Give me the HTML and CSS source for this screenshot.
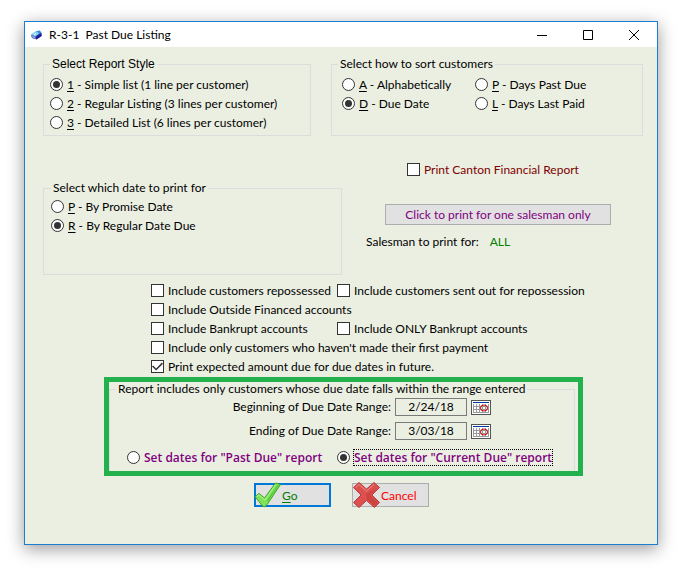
FILE: index.html
```html
<!DOCTYPE html>
<html lang="en">
<head>
    <meta charset="UTF-8">
    <meta name="viewport" content="width=device-width, initial-scale=1.0">
    <title>R-3-1 Past Due Listing</title>
    <link rel="stylesheet" href="styles.css">
</head>
<body>

    <main class="window">
        <header class="titlebar">
            <svg class="app-icon" width="11" height="10" viewBox="0 0 11 10">
                <path d="M0 5L6 1L10.500 3V6L5.500 9.500L1 8Z" fill="#2a3cc4"/>
                <path d="M0 4.500L5 1L9 3L4.500 6.500Z" fill="#7fd3ee"/>
                <path d="M6 1L9 .5L10.500 3L8 3.500Z" fill="#3f86d8"/>
                <path d="M0 5L4.500 6.500V9L1 7.500Z" fill="#8c94d4"/>
                <path d="M5 6.500L10.500 3.500V6L5.500 9.500Z" fill="#1a1f8f"/>
                <path d="M3 4.500L5 3.500" stroke="#fff"/>
            </svg>
            <h1>R-3-1&nbsp; Past Due Listing</h1>
            <div class="window-buttons">
                <button type="button" aria-label="Minimize"><svg width="10" height="10"><path d="M0 5.500H10"/></svg></button>
                <button type="button" aria-label="Maximize"><svg width="10" height="10"><path d="M.5 .5H9.500V9.500H.5Z"/></svg></button>
                <button type="button" aria-label="Close"><svg width="10" height="10"><path d="M0 0L10 10M10 0L0 10"/></svg></button>
            </div>
        </header>

        <form class="client">
            <!-- Report style and sort order -->
            <div class="row-top">
                <fieldset>
                    <legend class="legend-alt">Select Report Style</legend>
                    <label class="option"><input type="radio" name="style" checked><span><u>1</u> - Simple list (1 line per customer)</span></label>
                    <label class="option"><input type="radio" name="style"><span><u>2</u> - Regular Listing (3 lines per customer)</span></label>
                    <label class="option"><input type="radio" name="style"><span><u>3</u> - Detailed List (6 lines per customer)</span></label>
                </fieldset>
                <fieldset>
                    <legend>Select how to sort customers</legend>
                    <div class="sort-options">
                        <label class="option"><input type="radio" name="sort"><span><u>A</u> - Alphabetically</span></label>
                        <label class="option"><input type="radio" name="sort"><span><u>P</u> - Days Past Due</span></label>
                        <label class="option"><input type="radio" name="sort" checked><span><u>D</u> - Due Date</span></label>
                        <label class="option"><input type="radio" name="sort"><span><u>L</u> - Days Last Paid</span></label>
                    </div>
                </fieldset>
            </div>

            <!-- Date type and salesman -->
            <div class="row-middle">
                <fieldset class="date-type">
                    <legend>Select which date to print for</legend>
                    <label class="option"><input type="radio" name="dateType"><span><u>P</u> - By Promise Date</span></label>
                    <label class="option"><input type="radio" name="dateType" checked><span><u>R</u> - By Regular Date Due</span></label>
                </fieldset>
                <div class="salesman">
                    <label class="option canton"><input type="checkbox"><span>Print Canton Financial Report</span></label>
                    <button type="button" class="btn salesman-button">Click to print for one salesman only</button>
                    <p class="salesman-line">Salesman to print for: <span class="salesman-value">ALL</span></p>
                </div>
            </div>

            <!-- Include options -->
            <div class="includes">
                <label class="option"><input type="checkbox"><span>Include customers repossessed</span></label>
                <label class="option"><input type="checkbox"><span>Include customers sent out for repossession</span></label>
                <label class="option wide"><input type="checkbox"><span>Include Outside Financed accounts</span></label>
                <label class="option"><input type="checkbox"><span>Include Bankrupt accounts</span></label>
                <label class="option"><input type="checkbox"><span>Include ONLY Bankrupt accounts</span></label>
                <label class="option wide"><input type="checkbox"><span>Include only customers who haven't made their first payment</span></label>
                <label class="option wide"><input type="checkbox" checked><span>Print expected amount due for due dates in future.</span></label>
            </div>

            <!-- Due date range -->
            <div class="highlight">
                <fieldset class="range">
                    <legend>Report includes only customers whose due date falls within the range entered</legend>
                    <div class="range-fields">
                        <label for="beginDate">Beginning of Due Date Range:</label>
                        <input type="text" class="date" id="beginDate" value="2/24/18">
                        <button type="button" class="calendar" aria-label="Pick beginning date">
                            <svg width="16" height="11" viewBox="0 0 16 11">
                                <path d="M0 0H16V11H0Z" fill="#fff"/>
                                <path d="M.5 2V11M3.500 2V11M6.500 2V11M9.500 2V11M12.500 2V11M15.500 2V11M0 4.500H16M0 7.500H16M0 10.500H16" stroke="#999" fill="none"/>
                                <path d="M0 .5H16" stroke="#003c96"/>
                                <ellipse cx="11" cy="6" rx="3.500" ry="3" fill="none" stroke="#d00000"/>
                            </svg>
                        </button>
                        <label for="endDate">Ending of Due Date Range:</label>
                        <input type="text" class="date" id="endDate" value="3/03/18">
                        <button type="button" class="calendar" aria-label="Pick ending date">
                            <svg width="16" height="11" viewBox="0 0 16 11">
                                <path d="M0 0H16V11H0Z" fill="#fff"/>
                                <path d="M.5 2V11M3.500 2V11M6.500 2V11M9.500 2V11M12.500 2V11M15.500 2V11M0 4.500H16M0 7.500H16M0 10.500H16" stroke="#999" fill="none"/>
                                <path d="M0 .5H16" stroke="#003c96"/>
                                <ellipse cx="11" cy="6" rx="3.500" ry="3" fill="none" stroke="#d00000"/>
                            </svg>
                        </button>
                    </div>
                    <div class="presets">
                        <label class="option"><input type="radio" name="preset"><span>Set dates for "Past Due" report</span></label>
                        <label class="option"><input type="radio" name="preset" checked><span class="focused">Set dates for "Current Due" report</span></label>
                    </div>
                </fieldset>
            </div>

            <div class="actions">
                <button type="button" class="btn action go">
                    <svg width="27" height="26" viewBox="0 0 27 26">
                        <path d="M1 14.500L5 11.500L10.500 16L21.500 1L26.500 2.500L13.500 22L10.500 25L8.500 24Z" fill="#7fe35a" stroke="#3fa52c"/>
                        <path d="M3 14.500L5 13L11 18L21.500 3" fill="none" stroke="#b0f592"/>
                        <path d="M13 18L23.500 3L25 3L14 20Z" fill="#58cc3e"/>
                    </svg>
                    <span><u>G</u>o</span>
                </button>
                <button type="button" class="btn action cancel">
                    <svg width="27" height="26" viewBox="0 0 27 26">
                        <path d="M6 .5L13.500 7L21 .5L26.500 5.500L19 13L26.500 20.500L21.500 25.500L13.500 18.500L6 25.500L.5 20.500L8 13L.5 5.500Z" fill="#dc5050" stroke="#b83a3a"/>
                        <path d="M2.500 5.500L6 2.500L13.500 9L21 2.500" fill="none" stroke="#f08a86"/>
                        <path d="M13.500 17L21.500 24L25 20.500L17 13L24 6L13 12Z" fill="#cf4242"/>
                    </svg>
                    <span>Cancel</span>
                </button>
            </div>
        </form>
    </main>

</body>
</html>
```

FILE: styles.css
```css
/* General */
* {
    box-sizing: border-box;
}

body {
    margin: 0;
    padding: 21px 39px 30px 24px;
    background-color: #fff;
    color: #000;
    font: 12px/19px Lato, "Open Sans", sans-serif;
}

button, input {
    font: inherit;
    margin: 0;
    padding: 0;
}

/* Window frame */
.window {
    border: 1px solid #1a7fd4;
    background-color: #ebefe2;
    box-shadow: 0 4px 16px rgba(0, 0, 0, 0.4);
}

.titlebar {
    display: flex;
    align-items: center;
    height: 25px;
    padding-left: 6px;
    background-color: #fff;
}

.titlebar h1 {
    flex: 1;
    margin: 0 0 0 7px;
    font-size: 12px;
    font-weight: normal;
}

.window-buttons {
    display: flex;
}

.window-buttons button {
    display: grid;
    place-items: center;
    width: 46px;
    height: 25px;
    border: none;
    background: none;
}

.window-buttons path {
    fill: none;
    stroke: #000;
}

/* Group boxes */
.client {
    padding: 10px 14px 37px 18px;
}

fieldset {
    min-width: 0;
    margin: 0;
    padding: 4px 6px 3px;
    border: 1px solid #dcdcdc;
}

legend {
    padding: 0 2px;
    line-height: 14px;
}

.legend-alt {
    font-family: "Liberation Sans", Arial, sans-serif;
}

.row-top {
    display: grid;
    grid-template-columns: 268px 1fr;
    gap: 20px;
}

.sort-options {
    display: grid;
    grid-template-columns: 133px 1fr;
    padding-left: 4px;
}

.row-middle {
    display: grid;
    grid-template-columns: 299px 1fr;
    gap: 24px;
    margin-top: 24px;
}

.date-type {
    margin-top: 21px;
    padding: 2px 7px 39px;
}

/* Radios and check boxes */
.option {
    display: flex;
    align-items: center;
    gap: 4px;
    height: 19px;
    white-space: nowrap;
}

.option input {
    appearance: none;
    display: grid;
    place-items: center;
    flex: none;
    width: 13px;
    height: 13px;
    border: 1px solid #333;
    background-color: #fff;
}

.option input[type="radio"] {
    border-radius: 50%;
}

.option input[type="radio"]:checked::before {
    content: "";
    width: 7px;
    height: 7px;
    border-radius: 50%;
    background-color: #333;
}

.option input[type="checkbox"]:checked::before {
    content: "";
    width: 11px;
    height: 11px;
    background-color: #333;
    clip-path: polygon(0 50%, 10% 42%, 38% 68%, 90% 14%, 100% 24%, 38% 86%);
}

u {
    text-underline-offset: 2px;
}

/* Salesman */
.canton {
    padding-left: 41px;
    color: #800000;
}

.btn {
    border: 1px solid #adadad;
    background-color: #e1e1e1;
}

.salesman-button {
    display: block;
    width: 226px;
    height: 21px;
    margin: 25px 0 7px 19px;
    color: #800080;
}

.salesman-line {
    margin: 0;
}

.salesman-value {
    margin-left: 8px;
    color: #008000;
}

/* Include options */
.includes {
    display: grid;
    grid-template-columns: 186px 1fr;
    margin-top: 6px;
    padding-left: 108px;
}

.wide {
    grid-column: span 2;
}

/* Due date range */
.highlight {
    margin: 1px 60px 0 61px;
    border: 5px solid #22b14c;
}

.range {
    margin-right: 3px;
    padding: 2px 6px 4px;
    border-bottom: none;
}

.range-fields {
    display: grid;
    grid-template-columns: 275px 72px 20px;
    align-items: center;
    gap: 6px 4px;
    line-height: 18px;
}

.range-fields label {
    text-align: right;
}

.date {
    width: 72px;
    height: 18px;
    border: 1px solid #7a7a7a;
    background-color: transparent;
    text-align: center;
}

.calendar {
    display: grid;
    place-items: center;
    width: 20px;
    height: 15px;
    border: 1px solid #555;
    background-color: #fff;
}

.presets {
    display: grid;
    grid-template-columns: 210px 1fr;
    margin-top: 8px;
    padding-left: 11px;
    color: #800080;
    font-family: "Open Sans", sans-serif;
    font-weight: 600;
}

.focused {
    line-height: 15px;
    outline: 1px dotted #000;
}

/* Go / Cancel */
.actions {
    display: flex;
    justify-content: center;
    gap: 21px;
    margin-top: 7px;
    padding-right: 3px;
}

.action {
    display: flex;
    align-items: center;
    gap: 1px;
    width: 77px;
    height: 24px;
}

.action svg {
    flex: none;
}

.go {
    border: 2px solid #0078d7;
    color: #008000;
}

.go svg {
    margin-left: -2px;
}

.cancel {
    color: #ff0000;
}
```
